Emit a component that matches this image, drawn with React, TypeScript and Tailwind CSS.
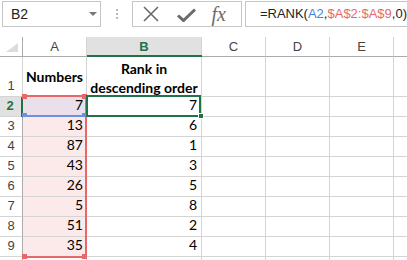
import React from 'react'

const cellFont = { fontFamily: 'Lato, "Liberation Sans", sans-serif' }
const headFont = { fontFamily: '"Liberation Sans", Arial, sans-serif' }

const rows = [
  { n: 3, a: 13, b: 6 },
  { n: 4, a: 87, b: 1 },
  { n: 5, a: 43, b: 3 },
  { n: 6, a: 26, b: 5 },
  { n: 7, a: 5, b: 8 },
  { n: 8, a: 51, b: 2 },
  { n: 9, a: 35, b: 4 },
]

function Handle({ className }: { className: string }) {
  return <div className={`absolute w-[5px] h-[5px] ${className}`} />
}

function FormulaBar() {
  return (
    <div className="flex items-start h-[37px] pt-[1px]" style={headFont}>
      <div className="ml-[2px] w-[99px] h-[26px] border border-[#c6c6c6] flex items-center justify-between pl-[8px] pr-[3px]">
        <span className="text-[14px] text-[#222]">B2</span>
        <div className="w-0 h-0 border-l-[4px] border-r-[4px] border-t-[4px] border-l-transparent border-r-transparent border-t-[#777]" />
      </div>
      <div className="w-[32px] h-[26px] flex flex-col items-center justify-center gap-[2px]">
        <div className="w-[2px] h-[2px] bg-[#bbb]" />
        <div className="w-[2px] h-[2px] bg-[#bbb]" />
        <div className="w-[2px] h-[2px] bg-[#bbb]" />
      </div>
      <div className="w-[110px] h-[26px] border border-[#c6c6c6] flex items-center">
        <svg width="16" height="16" viewBox="0 0 16 16" className="ml-[10px]">
          <path d="M1 1 L15 15 M15 1 L1 15" stroke="#6a6a6a" strokeWidth="1.6" fill="none" />
        </svg>
        <svg width="19" height="14" viewBox="0 0 19 14" className="ml-[18px] mt-[2px]">
          <path d="M1 7.5 L6.5 12.5 L18 1.5" stroke="#6a6a6a" strokeWidth="3" fill="none" />
        </svg>
        <span
          className="ml-[15px] text-[20px] italic text-[#6a6a6a] leading-none"
          style={{ fontFamily: '"Liberation Serif", "DejaVu Serif", serif' }}
        >
          fx
        </span>
      </div>
      <div className="ml-[3px] flex-1 h-[26px] border-t border-b border-l border-[#c6c6c6] flex items-center pl-[14px] text-[13px] whitespace-nowrap text-[#222]">
        <span>=RANK(</span>
        <span className="text-[#4a7fd4]">A2</span>
        <span>,</span>
        <span className="text-[#e8686a]">$A$2:$A$9</span>
        <span>,0)</span>
      </div>
    </div>
  )
}

export default function App() {
  const grid = 'border-r border-b border-[#d4d4d4]'
  const rowHead = 'border-r border-b border-[#d4d4d4] bg-white text-[13px] text-[#444] flex items-end justify-center pb-[1px]'
  const colHead = 'border-r border-b border-[#ababab] border-r-[#d4d4d4] bg-white text-[13px] text-[#444] flex items-center justify-center'

  return (
    <div className="w-[407px] h-[260px] overflow-hidden bg-white">
      <FormulaBar />
      <div
        className="grid grid-cols-[23px_64px_115px_64px_64px_64px_1fr] grid-rows-[20px_40px_repeat(9,20px)]"
        style={headFont}
      >
        {/* header row */}
        <div className="relative border-r border-b border-[#ababab]">
          <svg width="12" height="9" className="absolute right-[4px] bottom-[4px]">
            <path d="M12 0 L12 9 L0 9 Z" fill="#dcdcdc" />
          </svg>
        </div>
        <div className={colHead}>A</div>
        <div className="relative border-r border-b border-[#d4d4d4] bg-[#e1e1e1] text-[13px] font-bold text-[#217346] flex items-center justify-center">
          B
          <div className="absolute left-0 right-[-1px] bottom-[-1px] h-[2px] bg-[#217346]" />
        </div>
        <div className={colHead}>C</div>
        <div className={colHead}>D</div>
        <div className={colHead}>E</div>
        <div className="border-b border-[#ababab]" />

        {/* row 1 */}
        <div className={rowHead}>1</div>
        <div className={`${grid} flex items-center justify-center text-[14px] font-bold text-black`} style={cellFont}>
          Numbers
        </div>
        <div className={`${grid} flex items-center justify-center text-center text-[14px] font-bold text-black leading-[19px] pt-[2px]`} style={cellFont}>
          Rank in
          <br />
          descending order
        </div>
        <div className={grid} />
        <div className={grid} />
        <div className={grid} />
        <div className="border-b border-[#d4d4d4]" />

        {/* row 2 */}
        <div className="relative border-b border-[#d4d4d4] border-r border-r-[#ababab] bg-[#e1e1e1] text-[13px] font-bold text-[#217346] flex items-end justify-center pb-[1px] pr-[2px]">
          2
          <div className="absolute right-[-1px] top-0 bottom-[-1px] w-[2px] bg-[#217346]" />
        </div>
        <div className={`${grid} relative bg-[#e9e0ea] flex items-end justify-end pr-[3px] pb-[1px] text-[14px] text-black`} style={cellFont}>
          7
          <div className="absolute left-[1px] right-[1px] top-[-2px] h-[2px] bg-[#e8686a]" />
          <div className="absolute left-[1px] right-[1px] bottom-[-1px] h-[2px] bg-[#6d8fe0]" />
          <div className="absolute right-[-1px] top-0 bottom-0 w-[2px] bg-[#e8686a]" />
          <Handle className="left-[-1px] top-[-3px] bg-[#e8686a]" />
          <Handle className="right-[-1px] top-[-3px] bg-[#e8686a]" />
          <Handle className="left-[-1px] bottom-[-2px] bg-[#6d8fe0]" />
          <Handle className="right-[-1px] bottom-[-2px] bg-[#6d8fe0]" />
        </div>
        <div className={`${grid} relative flex items-end justify-end pr-[4px] pb-[1px] text-[14px] text-black`} style={cellFont}>
          7
          <div className="absolute left-[-1px] right-0 top-[-2px] bottom-[-1px] border-2 border-[#217346]" />
          <div className="absolute right-[-3px] bottom-[-3px] w-[6px] h-[6px] bg-[#217346] border border-white" />
        </div>
        <div className={grid} />
        <div className={grid} />
        <div className={grid} />
        <div className="border-b border-[#d4d4d4]" />

        {rows.map((r) => (
          <React.Fragment key={r.n}>
            <div className={`${rowHead} border-r-[#ababab]`}>{r.n}</div>
            <div className={`${grid} relative bg-[#fce9e9] flex items-end justify-end pr-[3px] pb-[1px] text-[14px] text-black`} style={cellFont}>
              {r.a}
              <div className="absolute right-[-1px] top-0 bottom-[-1px] w-[2px] bg-[#e8686a]" />
              {r.n === 9 && (
                <>
                  <div className="absolute left-[1px] right-[1px] bottom-[-2px] h-[2px] bg-[#e8686a]" />
                  <Handle className="left-[-1px] bottom-[-3px] bg-[#e8686a]" />
                  <Handle className="right-[-1px] bottom-[-3px] bg-[#e8686a]" />
                </>
              )}
            </div>
            <div className={`${grid} flex items-end justify-end pr-[4px] pb-[1px] text-[14px] text-black`} style={cellFont}>
              {r.b}
            </div>
            <div className={grid} />
            <div className={grid} />
            <div className={grid} />
            <div className="border-b border-[#d4d4d4]" />
          </React.Fragment>
        ))}

        <div className="border-r border-[#ababab]" />
        <div className="border-r border-[#d4d4d4]" />
        <div className="border-r border-[#d4d4d4]" />
        <div className="border-r border-[#d4d4d4]" />
        <div className="border-r border-[#d4d4d4]" />
        <div className="border-r border-[#d4d4d4]" />
      </div>
    </div>
  )
}
